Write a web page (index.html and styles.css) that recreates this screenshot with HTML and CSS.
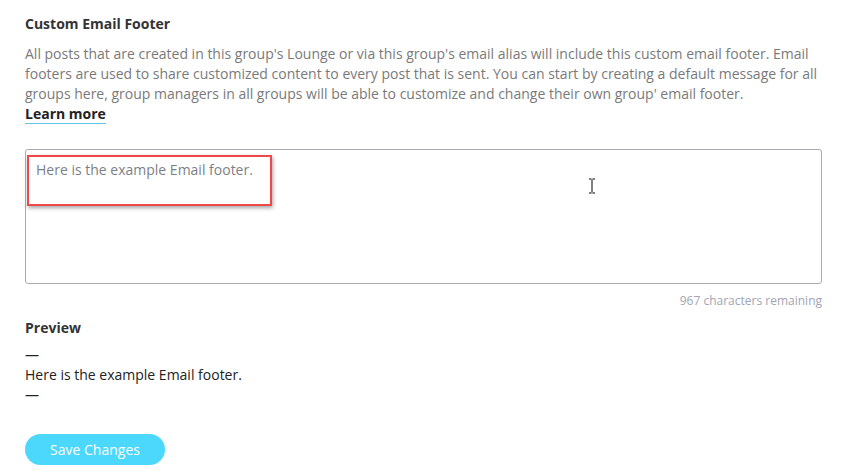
FILE: index.html
```html
<!DOCTYPE html>
<html lang="en">
<head>
    <meta charset="UTF-8">
    <meta name="viewport" content="width=device-width, initial-scale=1.0">
    <title>Custom Email Footer</title>
    <link rel="stylesheet" href="styles.css">
</head>
<body>
    <div class="page">
        <h3 class="title">Custom Email Footer</h3>
        <p class="desc">All posts that are created in this group's Lounge or via this group's email alias will include this custom email footer. Email footers are used to share customized content to every post that is sent. You can start by creating a default message for all groups here, group managers in all groups will be able to customize and change their own group' email footer.<br><a href="#" class="learn">Learn more</a></p>

        <div class="editor">
            <div class="box">Here is the example Email footer.</div>
            <div class="highlight"></div>
            <svg class="cursor" width="8" height="16" viewBox="0 0 8 16">
                <path d="M1 1h2.5M4.5 1H7M4 1.5v13M1 15h2.5M4.5 15H7" stroke="#000" stroke-width="1" fill="none"/>
            </svg>
        </div>
        <div class="counter">967 characters remaining</div>

        <h3 class="title preview-title">Preview</h3>
        <div class="preview">
            <div>—</div>
            <div>Here is the example Email footer.</div>
            <div>—</div>
        </div>

        <button class="save">Save Changes</button>
    </div>
</body>
</html>
```

FILE: styles.css
```css
body
{
    margin: 0;
    background-color: #fff;
    font-family: "Open Sans", "Liberation Sans", sans-serif;
}

.page
{
    padding: 14px 22px 0 25px;
}

.title
{
    margin: 0;
    font-size: 14px;
    font-weight: 700;
    color: #333;
    line-height: 19px;
}

.desc
{
    margin: 11px 0 0 0;
    font-size: 14px;
    line-height: 20px;
    color: #7a7a7a;
}

.learn
{
    color: #222;
    font-weight: 700;
    text-decoration: none;
    border-bottom: 1px solid #5fc6e8;
}

.editor
{
    position: relative;
    margin-top: 25px;
}

.box
{
    height: 135px;
    border: 1px solid #a9abb4;
    border-radius: 3px;
    padding: 10px 10px;
    box-sizing: border-box;
    font-size: 14px;
    color: #7d7f87;
    line-height: 20px;
}

.highlight
{
    position: absolute;
    left: 2px;
    top: 6px;
    width: 241px;
    height: 47px;
    border: 2px solid #ef4848;
    box-shadow: 1px 2px 4px rgba(0, 0, 0, 0.35);
}

.cursor
{
    position: absolute;
    left: 563px;
    top: 29px;
}

.counter
{
    text-align: right;
    font-size: 12px;
    color: #a2a4b4;
    margin-top: 8px;
    line-height: 17px;
}

.preview-title
{
    margin-top: 9px;
}

.preview
{
    margin-top: 8px;
    font-size: 14px;
    line-height: 20px;
    color: #222;
}

.save
{
    margin-top: 29px;
    width: 140px;
    height: 31px;
    border: none;
    border-radius: 16px;
    background-color: #4cd8fc;
    color: #fff;
    font-family: "Open Sans", "Liberation Sans", sans-serif;
    font-size: 14px;
}
```
